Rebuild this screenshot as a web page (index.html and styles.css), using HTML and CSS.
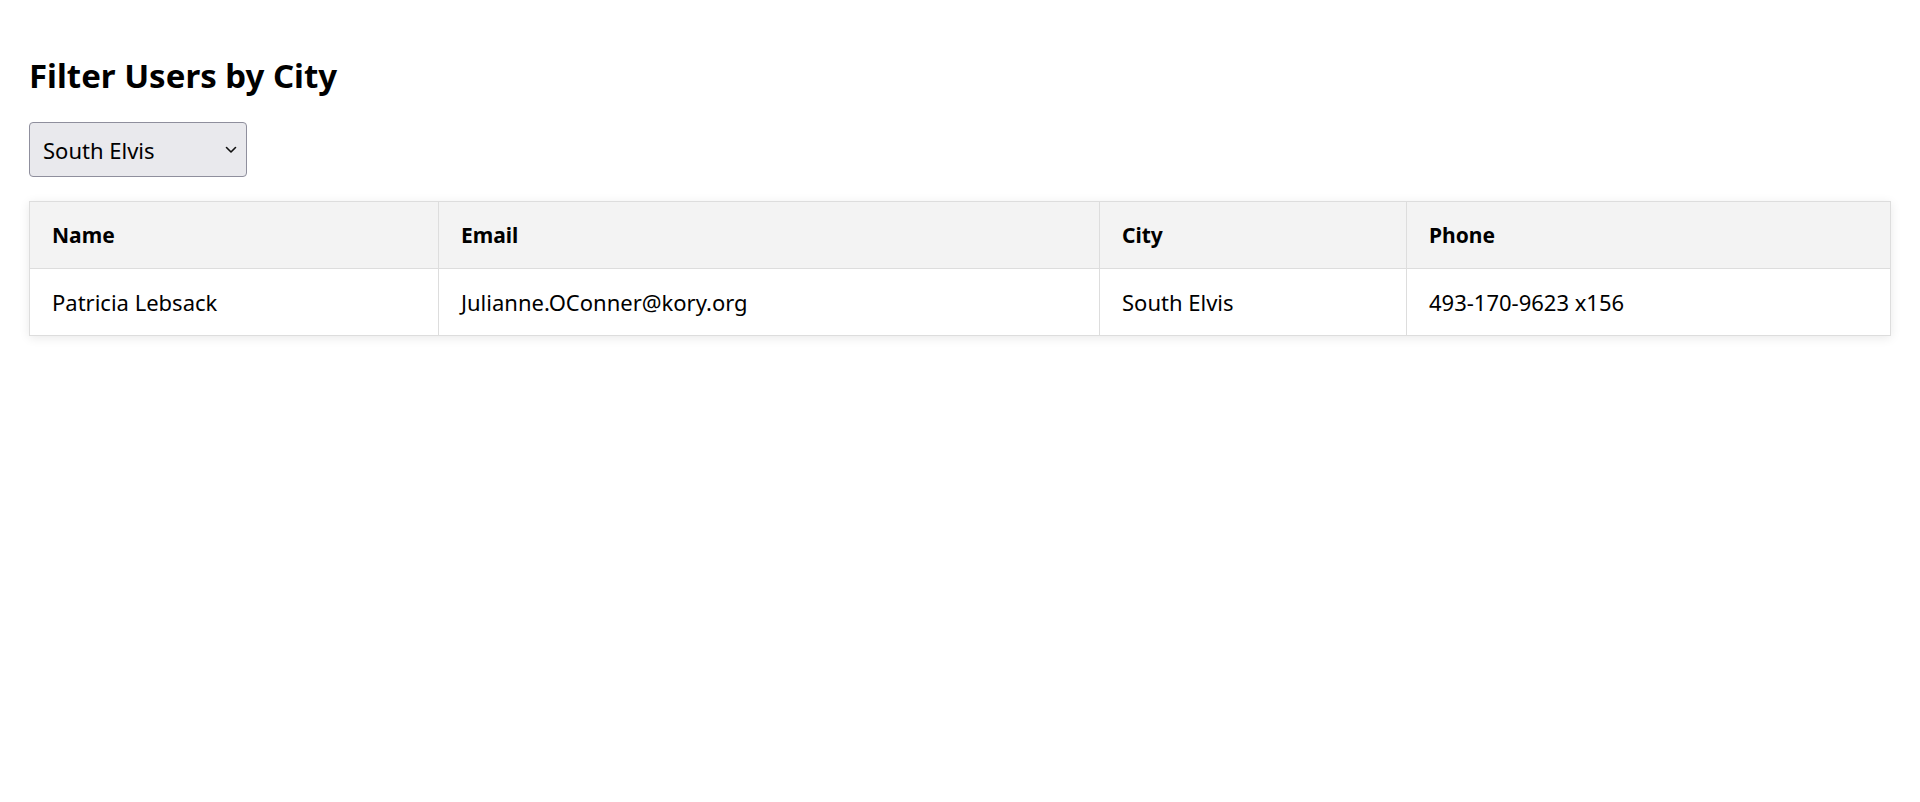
FILE: index.html
```html
<!DOCTYPE html>
<html lang="en">
<head>
<meta charset="utf-8">
<title>Filter Users by City</title>
<link rel="stylesheet" href="styles.css">
</head>
<body>
<div class="page">
  <h1 class="title">Filter Users by City</h1>
  <div class="select-wrap">
    <select class="city-select">
      <option>All Cities</option>
      <option selected>South Elvis</option>
      <option>Gwenborough</option>
      <option>Wisokyburgh</option>
      <option>McKenziehaven</option>
    </select>
    <svg class="chevron" width="12" height="8" viewBox="0 0 12 8" aria-hidden="true">
      <path d="M1.5 1.5 L6 6 L10.5 1.5" fill="none" stroke="#111" stroke-width="1.6" stroke-linecap="round" stroke-linejoin="round"/>
    </svg>
  </div>
  <table class="users">
    <colgroup>
      <col class="c-name">
      <col class="c-email">
      <col class="c-city">
      <col class="c-phone">
    </colgroup>
    <thead>
      <tr>
        <th>Name</th>
        <th>Email</th>
        <th>City</th>
        <th>Phone</th>
      </tr>
    </thead>
    <tbody>
      <tr>
        <td>Patricia Lebsack</td>
        <td>Julianne.OConner@kory.org</td>
        <td>South Elvis</td>
        <td>493-170-9623 x156</td>
      </tr>
    </tbody>
  </table>
</div>
</body>
</html>
```

FILE: styles.css
```css
html, body {
  margin: 0;
  padding: 0;
  background: #ffffff;
}

body {
  font-family: "Noto Sans", "Open Sans", "DejaVu Sans", sans-serif;
  color: #000;
}

.page {
  padding: 54px 29px 40px 29px;
}

.title {
  margin: 0;
  font-size: 33px;
  line-height: 44px;
  font-weight: 700;
  color: #000;
}

.select-wrap {
  position: relative;
  margin-top: 24px;
  width: 218px;
  height: 55px;
}

.city-select {
  -webkit-appearance: none;
  appearance: none;
  box-sizing: border-box;
  width: 218px;
  height: 55px;
  margin: 0;
  padding: 0 30px 0 13px;
  border: 1px solid #8f8f9d;
  border-radius: 4px;
  background: #e9e9ed;
  font-family: "Noto Sans", "Open Sans", sans-serif;
  font-size: 22px;
  color: #000;
}

.chevron {
  position: absolute;
  right: 10px;
  top: 24px;
  pointer-events: none;
}

.users {
  margin-top: 24px;
  width: 100%;
  table-layout: fixed;
  border-collapse: collapse;
  border: 1px solid #dddddd;
  background: #fff;
  box-shadow: 0 2px 10px rgba(0, 0, 0, 0.09);
}

.c-name { width: 409px; }
.c-email { width: 661px; }
.c-city { width: 307px; }

.users th,
.users td {
  border: 1px solid #dddddd;
  padding: 18px 22px;
  line-height: 30px;
  font-size: 22px;
  text-align: left;
  color: #000;
}

.users th {
  background: #f3f3f3;
  font-size: 21px;
  font-weight: 700;
}
```
